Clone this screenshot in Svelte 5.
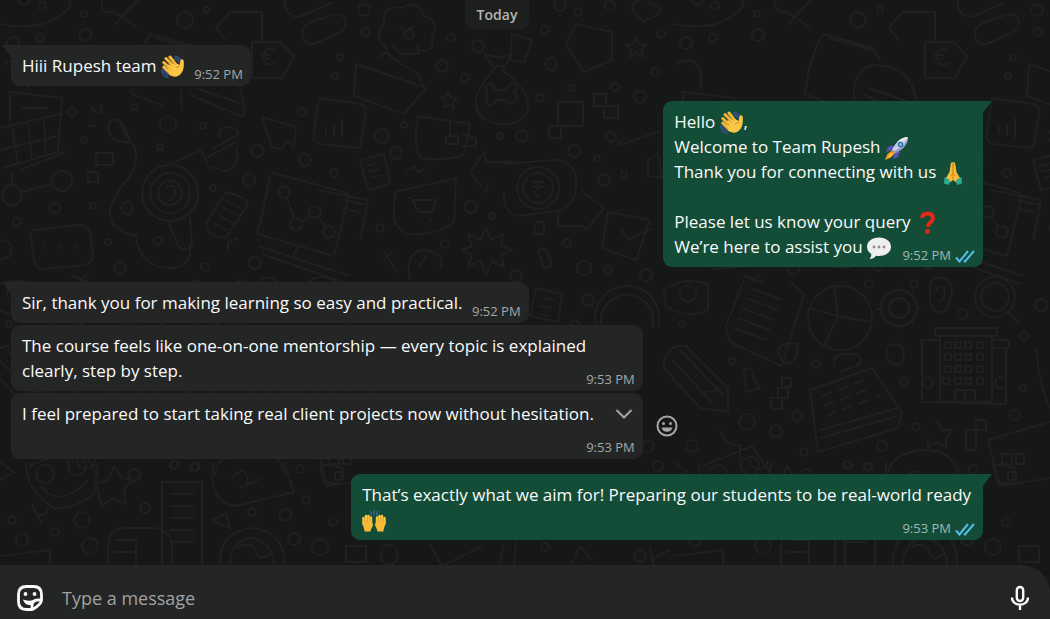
<script lang="ts">
	interface Message {
		id: number;
		from: 'them' | 'me';
		text: string;
		time: string;
		tail?: boolean;
		active?: boolean;
	}

	const MESSAGES: Message[] = [
		{ id: 1, from: 'them', text: 'Hiii Rupesh team 👋', time: '9:52 PM', tail: true },
		{
			id: 2,
			from: 'me',
			text: 'Hello 👋,\nWelcome to Team Rupesh 🚀\nThank you for connecting with us 🙏\n\nPlease let us know your query ❓\nWe’re here to assist you 💬',
			time: '9:52 PM',
			tail: true
		},
		{ id: 3, from: 'them', text: 'Sir, thank you for making learning so easy and practical.', time: '9:52 PM', tail: true },
		{
			id: 4,
			from: 'them',
			text: 'The course feels like one-on-one mentorship — every topic is explained clearly, step by step.',
			time: '9:53 PM'
		},
		{
			id: 5,
			from: 'them',
			text: 'I feel prepared to start taking real client projects now without hesitation.',
			time: '9:53 PM',
			active: true
		},
		{
			id: 6,
			from: 'me',
			text: 'That’s exactly what we aim for! Preparing our students to be real-world ready 🙌',
			time: '9:53 PM',
			tail: true
		}
	];

	const EMOJI = /(👋|🚀|🙏|❓|💬|🙌)/u;

	// Wallpaper artwork, one entry per doodle, repeated every TILE pixels
	const TILE = 673;
	const DOODLES = [
		// crumpled note, bow, capsules
		'M0 24Q40 32 62 14Q72 8 70 0M18 0q6 10 12 0M102 0q-2 14 12 12l24 16M138 0l-12 12-10 12',
		'M285 0q-2 16 14 17l34-15M302 32q2-8 12-11l22-7q10 0 10 10-2 8-10 10l-22 10q-12 2-12-12z',
		'M262 42V12h-32l-14 15 10 14M252 42h28l14 14-12 22h-30zM276 50q-12-4-12 7t12 6m-15-8h10m-10 4h9',
		// open book
		'M150 34l50 14 8 14M150 34q-14 24-18 60l32 12M155 38l44 12M182 110q-6-50 28-44 34 2 34 50M195 88l50 17m-50-8l48 20',
		// shopping cart
		'M8 92l54 6-4 54L2 168M0 128l60-14M0 150l58-14M12 126l6 38M28 122l4 38M44 118l2 38M10 94v30M22 108h26',
		'M20 170l46-18',
		// mouse with its cord
		'M110 120q14-4 20 22-20 2-22-14zM90 106l8 8m2-10l2 10m-14 12h8M132 142q12 20-10 44-30 40 14 50M120 124l8 14',
		'M96 165h17v-12H96zM88 172h10v10H88z',
		// node and spanner
		'M2 195a10 10 0 1 0 20 0 10 10 0 1 0-20 0M52 181a10 10 0 1 0 20 0 10 10 0 1 0-20 0M22 192l30-8M12 185v-14',
		// medal
		'M142 193a28 28 0 1 0 56 0 28 28 0 1 0-56 0M150 193a20 20 0 1 0 40 0 20 20 0 1 0-40 0M158 193a12 12 0 1 0 24 0 12 12 0 1 0-24 0',
		'M165 188q10-6 10 4t-8 8M168 220l10 26q8 8 14-2l-2-28M136 234q2 34 36 34 20 0 18-24',
		'M166 166l36-16M202 152l8 18M210 150l26-14q6-6-4-8-14-4-12 10M212 166q20 12 26-8l-2-12M206 158l30-16',
		// card with three dots
		'M36 230l44-5q8 0 10 8l3 22q0 8-8 10l-40 4q-10 0-11-9l-3-22q-2-8 5-8M44 246l2 4m14-5l2 4m14-5l2 4',
		'M226 192q22 6 22 12l-22 34q-20-2-20-14zM226 200l16 9m-20-2l16 9m-20-1l16 9m-20-1l14 8',
		'M262 117l34 10-2 20-8-6-4 8-10-2zM190 92l6 6',
		// tablet with a chart
		'M320 98l40 6q8 2 6 10l-6 34-40-4q-8-2-6-10l4-30q0-6 2-6M326 134v-8m8 10v-12m8 14v-20M270 172l74 20q6 2 4 8l-14 56-76-22q-2-6 2-10l10-48',
		'M278 192a6 6 0 1 0 12 0 6 6 0 1 0-12 0M290 224a6 6 0 1 0 12 0 6 6 0 1 0-12 0M309 212a6 6 0 1 0 12 0 6 6 0 1 0-12 0M323 232a6 6 0 1 0 12 0 6 6 0 1 0-12 0M287 198l7 20m8 4l8-6m10 3l6 9',
		'M258 246l92 30M262 254l86 30M298 246l-6 12M318 190l50 10-8 40M344 200l22 5m-24 3l20 5',
		'M228 250v-8l10-4M70 275l12 4 6-6M90 282l-12-2',
		// tree
		'M388 50q-16-14-4-26-2-20 18-16 16-10 22 8 16 4 8 20 4 18-14 14M400 26l6 6 8-6M404 34a5 5 0 1 0 10 0 5 5 0 1 0-10 0M392 44l8 10h18V44',
		// crate
		'M356 64l70 24-22 26-50-18zM378 58q8-10 14 0l26 16 6 14M0 240q16 2 10 16l-10 4',
		// bottle, money bag
		'M512 34l20 6-8 22-14-2zM484 54l10 14q6-4 10 0l8-14-12 4zM494 70q-20 20-18 36 4 18 30 18 22-2 22-18-2-20-26-36',
		'M488 92q-6-6 0-8t6 6h14q0-8 6-6t0 8q6 6 0 10t-8-2h-10q-4 8-8 4t0-12',
		'M576 24l36 8v28l-28 12-18-28zM448 92l3 5 6 1-4 4 1 6-5-3-5 2 1-6-4-4 6-1zM636 38l3 6 7 1-5 5 2 7-7-4-6 4 1-7-5-5 7-1z',
		'M558 102h25v24h-25zM549 126h12v12h-12zM594 94h12v12h-12zM604 106h14v12h-14zM636 2q10-10 14 2 14 0 8 10l-14 8-10-10q-4-8 2-10',
		// pocket, shopping list
		'M418 116l52 8-6 30q-18 8-42 4-10-8-4-42M450 120v16h8v8h-12v-8M462 134l14 4v8h-14',
		'M360 160l24-6 6 30-22 6zM366 166l12-3m-10 9l12-3m-10 9l12-3M406 172l8-6 4 6 8-4',
		// cart bubble
		'M396 192l60-14-2 44q-16 14-48 12-18-10-10-42M408 198l4 0 6 14h14l4-12h-24M418 220h2m10 0h2',
		// arrows round a coin
		'M484 152l-14 20 16 20 2-10M484 152l2 10h28M504 164l52-4q18 2 20 18 2 24-14 32l-44 6q-16-4-14-24M580 190l24 18-18 22-4-4h-24v-14',
		'M517 188a21 21 0 1 0 42 0 21 21 0 1 0-42 0M523 188a15 15 0 1 0 30 0 15 15 0 1 0-30 0M532 182h12m-12 5h12M534 182q10 4 0 10l6 6',
		'M486 228l5 12 12-6-2 12 12 4-12 5 3 12-12-6-6 14-6-14-12 6 4-12-10-5 10-4-4-12 12 6z',
		'M608 212l42 8-14 40-34-12zM620 228l8 12 24-12M536 222h8v12h-10zM538 250q10-4 10 6 8 10-4 12z',
		'M384 252l14 22m-6-22l-8 8M410 280q-6-30 16-30 20 4 14 18M426 256l-8 12M648 160l10-6 4 24-14-2zM620 145l40-14m-38 8l-6 8M675 65q18-12 26 6v18',
		// robot face, stars
		'M26 462q0 30 28 46 20 2 40-14l4-32M36 474a9 9 0 1 0 18 0 9 9 0 1 0-18 0M68 466a9 9 0 1 0 18 0 9 9 0 1 0-18 0M40 486q20 24 48-6M0 462l14 10-14 8',
		'M96 484l12-4 6-14 8 12 10 2-8 10 2 14-14-6-10 8-4-14zM32 504l10 20M34 508a7 7 0 1 0 14 0',
		'M162 482h40v84h-40zM170 494h24m-24 12h24m-24 12h24m-24 12h24m-24 12h24M108 566v-22q2-16 16-16h30q18 2 18 20v18M116 540h20v26m-22-14h20',
		// mug
		'M214 462q-8 40 22 44l58-14-10-30M232 478q12-14 16 0 0 14-10 8M248 484q6 0 12-6M212 520l14-6 4 14zM220 566q-2-34 32-38 34 4 32 38M230 566q0-26 22-28 22 4 22 28M236 548q16-8 20 4t16 0',
		'M320 464l22 4-4 16-14-2zM0 556l50-6v14M346 546h20v16h-20zM384 546q12-4 14 8-2 12-10 10-12-4-4-18M430 544l12 22 40-20M500 566l4-24m10 24l2-24M570 566l10-20 12 14M650 548l4 18m-4-6l20-10',
		// receipt, lamp, pencil
		'M536 288l26 6-4 28-28-6zM542 298l12 2m-14 6l12 2m-14 6l12 2M596 326a32 32 0 1 1 62 0M602 328a26 26 0 1 1 50 0M664 362q4-18 22-16l42 42v24l-28-4-36-40zM680 350l44 46m-52-36l40 42m-8-10l16-2',
		'M664 290q18-14 44-6v26q-22 10-42-4zM680 294a8 8 0 1 0 16 0 8 8 0 1 0-16 0',
		'M744 280l-18 46q0 16 12 20l44 20 22-72-14-12M750 288l32 12m-36-2l32 12m-36-2l32 12m-36-2l32 12m-36-2l32 12M778 350q2-8 20-6l-2 14q-14 14-18-8',
		// pie chart, gear
		'M808 318a32 32 0 1 0 64 0 32 32 0 1 0-64 0M834 287l4 29 32 6m-32-6l-14 30m14-30l-30-8',
		'M881 308a18 18 0 1 0 36 0 18 18 0 1 0-36 0M889 308a10 10 0 1 0 20 0 10 10 0 1 0-20 0M899 290v-4m12 10l3-3m3 15h4m-10 13l3 3m-15 2v4m-12-9l-3 3m-3-15h-4m10-12l-3-3',
		'M930 290q0-14 10-12 12 0 12 14-4 22-12 20-12-2-10-22M936 292q2-10 8-4 2 10-4 14M975 297a20 20 0 1 0 40 0 20 20 0 1 0-40 0M981 297a14 14 0 1 0 28 0 14 14 0 1 0-28 0M1008 312l12 12',
		// building
		'M935 328h62v8h-62zM940 336v66h52v-66M920 340h20M992 340h17v8h-17M922 340v62M922 402l84 2v-56M955 402v-12h20v12M965 390v12',
		'M945 342h6v6h-6zM955 342h6v6h-6zM965 342h6v6h-6zM977 342h6v6h-6zM945 354h6v6h-6zM955 354h6v6h-6zM965 354h6v6h-6zM977 354h6v6h-6zM945 366h6v6h-6zM955 366h6v6h-6zM965 366h6v6h-6zM977 366h6v6h-6zM943 378h6v6h-6zM955 378h6v6h-6zM965 378h6v6h-6zM977 378h6v6h-6z',
		// calculator
		'M810 390l62-22 30 44-4 16-80 24zM820 430l78-22m-78 30l78-22M834 366q-2-12 12-12 18-2 14 10l-20 8',
		'M822 396l10-4m6-2l10-4m6-2l10-4M824 406l10-4m6-2l10-4m6-2l10-4M826 416l10-4m6-2l10-4m6-2l10-4m6-2l8-4',
		'M744 368l8 2 2 10 6 8-14 4zM771 398h11v11h-11zM782 378h9v9h-9zM778 388h10v10h-10zM888 346q14-6 16 8-2 14-10 10-12-4-6-18M1036 348q4 40 14 60',
		'M720 430l6 12 14 4v16M702 466l50-20 20 30M936 420l6 10h10l-6 8v10l-10-6-8 6v-10M966 430h10v20h-10zM976 420h10v10h-10zM888 476q0-20 30-26 36-2 40 26M750 460a9 9 0 1 0 18 0M988 440l62-18M988 440l12 46 50-8M1002 454h10v10h-10zM1016 454h8v10h-8zM1008 472h8v8h-8z'
	];

	// Loose bubbles scattered between the doodles: [x, y, radius]
	const DOTS = [
		[185, 20, 8], [207, 10, 3], [42, 6, 4], [85, 35, 6], [40, 38, 4], [84, 14, 3], [340, 57, 3], [335, 76, 3],
		[168, 124, 8], [203, 126, 3], [72, 112, 4], [135, 107, 3], [84, 140, 3], [160, 147, 3], [127, 208, 6], [55, 208, 5],
		[93, 206, 3], [17, 222, 4], [120, 268, 6], [205, 267, 4], [255, 263, 6], [257, 151, 6], [305, 160, 6],
		[249, 180, 6], [213, 188, 3], [108, 242, 3], [158, 241, 4], [302, 112, 4], [334, 173, 4], [364, 10, 6],
		[365, 32, 4], [442, 66, 6], [465, 78, 4], [478, 46, 6], [451, 38, 4], [540, 98, 4], [551, 64, 6], [545, 30, 4],
		[560, 5, 6], [578, 12, 4], [610, 5, 5], [661, 34, 4], [686, 43, 6], [655, 72, 4], [571, 88, 3], [615, 87, 4],
		[640, 97, 6], [382, 136, 7], [396, 153, 6], [404, 125, 3], [500, 136, 3], [522, 136, 6], [611, 137, 5],
		[574, 151, 6], [597, 159, 3], [604, 180, 6], [624, 174, 3], [471, 207, 6], [492, 216, 3], [380, 228, 4],
		[445, 244, 4], [567, 243, 4], [584, 268, 7], [608, 270, 4], [516, 276, 6], [646, 275, 6], [134, 475, 6],
		[174, 465, 4], [194, 467, 4], [145, 508, 5], [82, 520, 8], [12, 520, 4], [55, 532, 4], [22, 540, 6], [90, 546, 8],
		[252, 512, 4], [285, 515, 6], [300, 469, 4], [306, 500, 4], [294, 539, 6], [320, 547, 8], [333, 522, 4],
		[588, 300, 6], [682, 324, 3], [575, 324, 4], [869, 284, 4], [914, 284, 4], [963, 314, 5], [1041, 305, 6],
		[1024, 336, 4], [732, 361, 3], [816, 364, 4], [904, 382, 4], [747, 422, 8], [797, 416, 5], [776, 431, 6],
		[916, 427, 4], [804, 452, 4], [882, 446, 5], [1015, 415, 5], [1023, 388, 3], [928, 383, 5], [1001, 383, 6],
		[848, 465, 4], [869, 467, 4], [648, 446, 6], [692, 446, 6], [658, 466, 5], [545, 547, 4], [640, 556, 6]
	];

	let draft = $state('');
</script>

{#snippet emoji(char: string)}
	<svg class="emoji" viewBox="0 0 24 24" role="img" aria-label={char}>
		{#if char === '👋'}
			<path d="M14 1.500q5 .5 6.500 6M.8 15q.4 5.500 6 7.500M3 15q.6 3 4 5M14 4q3 .6 4 3" fill="none" stroke="#35507f" stroke-width="1.800" stroke-linecap="round" />
			<path d="M5 3.500 12 11M9 2l6 8M2.800 7.500l8 8M2.800 12l7 7" stroke="#f6b93a" stroke-width="3" stroke-linecap="round" />
			<path d="M6 10 15 8l3.500 2 1-4.500c.5-2 3-1.500 3.200.5.500 4 0 9-2.200 12-3 4-8 5-12 1.500z" fill="#fbc644" />
			<path d="m5.500 5.500 6 6M9.800 4.500l4.500 5.500M4.500 9.500l6 5.500M15 13q2-2 4-1.500" fill="none" stroke="#d08a1d" stroke-width=".8" />
		{:else if char === '🚀'}
			<path d="M8 9 3 11l-2 5 7-2zM15 16l-2 5-5 2 2-8z" fill="#5754b8" />
			<path d="M23 1c-6 0-12 4-16 13l3 3C18 14 23 8 23 1z" fill="#c9cfe2" />
			<path d="M23 1c-4 .2-8 2-11 5 5-1 8-2 11-5z" fill="#eef2f8" />
			<path d="M23 1c0 6-5 13-13 16l-1.500-1.500C17 12 21 7 23 1z" fill="#9097c8" />
			<circle cx="15.500" cy="8.500" r="2.800" fill="#2c6f9f" /><circle cx="15.500" cy="8.500" r="1.500" fill="#71c9e8" />
			<path d="M7 14.500 2.500 18 0 24l6-2.500L10 17z" fill="#f59b22" /><path d="m6.500 17-4 5 5.500-4z" fill="#ffe06a" />
		{:else if char === '🙏'}
			<path d="M11.800 1c-1.600 0-2 1-2.200 3L8.500 11 5 17l3 5 4-3zM12.200 1c1.600 0 2 1 2.200 3l1.100 7 3.500 6-3 5-4-3z" fill="#fbbb38" />
			<path d="M12 2v17M9.500 15l2.500-2.500 2.500 2.500" fill="none" stroke="#cf8618" stroke-width=".9" />
			<path d="M3.500 16 9 19l-1 5-5-1.500zM20.500 16 15 19l1 5 5-1.500z" fill="#29aa91" />
		{:else if char === '❓'}
			<path d="M7 7q.5-4.500 5.500-4.500T18 7c0 4-5 4-5 9" fill="none" stroke="#e62618" stroke-width="4" />
			<circle cx="12.500" cy="20.500" r="2.400" fill="#e62618" />
		{:else if char === '💬'}
			<path d="M12 1.500c7 0 12 4 12 9.300S19 20 12 20q-1.500 0-3-.3Q6.500 23 2.500 23q2-2 1.800-5Q0 15.500 0 10.800C0 5.500 5 1.500 12 1.500z" fill="#efefef" />
			<g fill="#8c8c8c"><circle cx="7" cy="11" r="1.400" /><circle cx="12" cy="11" r="1.400" /><circle cx="17" cy="11" r="1.400" /></g>
		{:else}
			<path d="M12 1v5M8.500 2.500 9.500 6M15.500 2.500l-1 3.500" stroke="#3a7197" stroke-width="1.200" stroke-linecap="round" />
			<path d="M1.500 9v6M4 7v8M6.500 7v8M9 8.500V15M15 8.500V15M17.500 7v8M20 7v8M22.500 9v6" stroke="#fcc844" stroke-width="2.400" stroke-linecap="round" />
			<path d="M.5 12h9l1.500 3.500c0 2-2 3.500-2.500 7h-6C2.500 19 .5 17 .5 12zM23.500 12h-9L13 15.500c0 2 2 3.500 2.500 7h6c0-3.500 2-5.500 2-10.500z" fill="#f9bb36" />
			<path d="M2.800 9v4M5.300 8v5M7.800 8.500V13M16.200 8.500V13M18.700 8v5M21.200 9v4" stroke="#d4911f" stroke-width=".6" />
		{/if}
	</svg>
{/snippet}

<main class="chat">
	<svg class="wallpaper" aria-hidden="true">
		<g id="doodles">
			{#each DOODLES as path}
				<path d={path} />
			{/each}
			{#each DOTS as [cx, cy, r]}
				<circle {cx} {cy} {r} />
			{/each}
		</g>
		<use href="#doodles" x={TILE} />
		<use href="#doodles" x={-TILE} />
	</svg>

	<section class="thread" aria-label="Conversation">
		<div class="day">Today</div>

		{#each MESSAGES as message (message.id)}
			<div class="row {message.from}" class:first={message.tail}>
				<div class="bubble">
					<div class="text">
						{#each message.text.split('\n') as line}
							<p>{#each line.split(EMOJI) as part}{#if EMOJI.test(part)}{@render emoji(part)}{:else if part}<span>{part}</span>{/if}{/each}</p>
						{/each}
					</div>

					{#if message.active}
						<button class="menu" type="button" aria-label="Message options">
							<svg width="18" height="18" viewBox="0 0 18 18"><path d="m1.500 5 7.500 7.500L16.500 5" /></svg>
						</button>
					{/if}

					<span class="meta">
						<time>{message.time}</time>
						{#if message.from === 'me'}
							<svg width="20" height="14" viewBox="0 0 20 14" role="img" aria-label="Read">
								<path d="m1 8.500 3.500 4L13 2M9 11.500l1 1L19 2" />
							</svg>
						{/if}
					</span>
				</div>

				{#if message.active}
					<button class="react" type="button" aria-label="React">
						<svg width="22" height="22" viewBox="0 0 22 22">
							<circle cx="11" cy="11" r="9.500" fill="none" stroke="currentColor" stroke-width="2" />
							<circle cx="7.500" cy="8.500" r="1.500" /><circle cx="14.500" cy="8.500" r="1.500" />
							<path d="M5.500 12.500h11c-.6 2.700-2.700 4.300-5.500 4.300s-4.900-1.600-5.500-4.300z" />
						</svg>
					</button>
				{/if}
			</div>
		{/each}
	</section>

	<form class="composer" onsubmit={(event) => event.preventDefault()}>
		<button type="button" aria-label="Stickers">
			<svg width="28" height="28" viewBox="0 0 28 28">
				<path d="M16 25.500h-5.500c-5.500 0-8-2.500-8-8v-7c0-5.500 2.500-8 8-8h7c5.500 0 8 2.500 8 8V16M16 25.500c1 0 9.500-5 9.500-9.500M16 25.500V22c0-4 2-6 6-6h3.500" fill="none" stroke="currentColor" stroke-width="2.800" stroke-linejoin="round" />
				<circle cx="9.500" cy="10" r="1.900" /><circle cx="18.500" cy="10" r="1.900" />
				<path d="M7 15.500c2.500 1.200 6.500 1.500 10.500.7-1.700 1.500-2.300 3-2.300 4.800-4 .6-7.200-1.500-8.200-5.500z" />
			</svg>
		</button>
		<input type="text" aria-label="Type a message" placeholder="Type a message" bind:value={draft} />
		<button type="button" aria-label="Record voice message">
			<svg class="mic" width="28" height="28" viewBox="0 0 28 28">
				<rect x="10.800" y="3" width="6.400" height="14" rx="3.200" />
				<path d="M6 13.500c0 9.500 16 9.500 16 0M14 20.500V26" />
			</svg>
		</button>
	</form>
</main>

<style>
	:global(body) {
		margin: 0;
		background: #161717;
	}

	.chat {
		position: relative;
		display: flex;
		flex-direction: column;
		min-height: 100vh;
		overflow: hidden;
		color: #fafafa;
		font-family: 'Segoe UI', 'Open Sans', 'Noto Sans', sans-serif;
		font-size: 17px;
		line-height: 25px;
	}

	.wallpaper {
		position: absolute;
		inset: 0;
		width: 100%;
		height: 100%;
		fill: none;
		stroke: #1f2020;
		stroke-width: 2;
		stroke-linejoin: round;
	}

	.thread {
		position: relative;
		display: flex;
		flex: 1;
		flex-direction: column;
		gap: 2px;
		padding: 0 67px 25px 11px;
	}

	.day {
		align-self: center;
		padding: 2px 12px 3px;
		border-radius: 0 0 8px 8px;
		background: #1d1f1f;
		color: #b3b4b4;
		font-size: 14px;
		font-weight: 600;
	}

	.row {
		display: flex;
		gap: 13px;
		align-items: center;
	}

	.row.first {
		margin-top: 13px;
	}

	.row.me {
		justify-content: flex-end;
	}

	.bubble {
		position: relative;
		display: grid;
		box-sizing: border-box;
		max-width: 65%;
		padding: 8px 8px 8px 11px;
		border-radius: 9px;
		background: #242626;
	}

	.me .bubble {
		background: #144d37;
	}

	.first.them .bubble {
		border-top-left-radius: 0;
	}

	.first.me .bubble {
		border-top-right-radius: 0;
	}

	.first .bubble::before {
		position: absolute;
		top: 0;
		width: 9px;
		height: 12px;
		background: inherit;
		content: '';
	}

	.first.them .bubble::before {
		right: 100%;
		clip-path: polygon(0 0, 100% 0, 100% 100%);
	}

	.first.me .bubble::before {
		left: 100%;
		clip-path: polygon(0 0, 100% 0, 0 100%);
	}

	.text,
	.meta,
	.menu {
		grid-area: 1 / 1;
	}

	.text p {
		min-height: 25px;
		margin: 0;
		white-space: pre-wrap;
	}

	/* Room for the time at the end of the last line */
	.text p:last-child::after {
		display: inline-block;
		width: 58px;
		content: '';
	}

	.me .text p:last-child::after {
		width: 84px;
	}

	.emoji {
		width: 24px;
		height: 24px;
		margin: -4px 0;
		vertical-align: -6px;
		position: relative;
		top: -3px;
	}

	.meta {
		display: flex;
		gap: 4px;
		align-items: center;
		align-self: end;
		justify-self: end;
		margin-bottom: -9px;
		color: #a5a6a6;
		font-size: 13px;
	}

	.me .meta {
		color: #a1b8af;
	}

	.meta svg {
		fill: none;
		stroke: #53bdeb;
		stroke-width: 2;
	}

	button {
		display: flex;
		padding: 0;
		border: 0;
		background: none;
		color: #fafafa;
		cursor: pointer;
	}

	button svg {
		fill: currentColor;
	}

	.menu {
		align-self: start;
		justify-self: end;
		padding: 4px 2px;
		color: #a5a6a6;
	}

	.menu svg {
		fill: none;
		stroke: currentColor;
		stroke-width: 2;
	}

	.react {
		color: #a5a6a6;
	}

	.composer {
		position: relative;
		display: flex;
		gap: 18px;
		align-items: center;
		box-sizing: border-box;
		height: 54px;
		padding: 12px 16px 0;
		border-top-right-radius: 28px;
		background: #242525;
	}

	.composer .mic {
		fill: none;
		stroke: currentColor;
		stroke-width: 2.4;
	}

	.composer input {
		flex: 1;
		min-width: 0;
		padding: 0;
		border: 0;
		outline: none;
		background: none;
		color: inherit;
		font: inherit;
		font-size: 18px;
	}

	.composer input::placeholder {
		color: #a0a1a1;
	}
</style>
